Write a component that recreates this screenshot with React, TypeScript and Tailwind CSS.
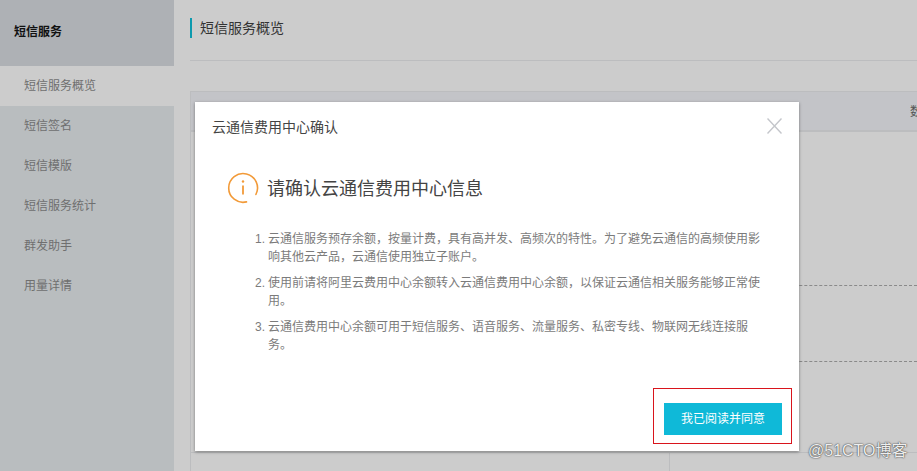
const navItems = ['短信服务概览', '短信签名', '短信模版', '短信服务统计', '群发助手', '用量详情']

const terms = [
  '云通信服务预存余额，按量计费，具有高并发、高频次的特性。为了避免云通信的高频使用影响其他云产品，云通信使用独立子账户。',
  '使用前请将阿里云费用中心余额转入云通信费用中心余额，以保证云通信相关服务能够正常使用。',
  '云通信费用中心余额可用于短信服务、语音服务、流量服务、私密专线、物联网无线连接服务。',
]

function Sidebar() {
  return (
    <aside className="w-[174px] shrink-0 bg-[#b9bdbf]">
      <div className="flex h-[66px] items-center bg-[#aeb1b5] pb-[3px] pl-[14px] text-[12px] font-bold text-[#111]">
        短信服务
      </div>
      {navItems.map((item, i) => (
        <div
          key={item}
          className={
            i === 0
              ? 'flex h-[40px] items-center bg-[#cccccc] pl-[24px] text-[12px] text-[#6f6f6f]'
              : 'flex h-[40px] items-center pl-[24px] text-[12px] text-[#6f6f6f]'
          }
        >
          {item}
        </div>
      ))}
    </aside>
  )
}

function Background() {
  return (
    <main className="min-w-0 flex-1 pl-[16px]">
      <div className="flex h-[61px] items-start border-b border-[#bcbdbf] pt-[18px]">
        <div className="flex h-[20px] items-center border-l-2 border-[#0d9aae] pl-[8px] text-[14px] text-[#333]">
          短信服务概览
        </div>
      </div>
      <div className="mt-[30px] border-l border-[#bcbdbf]">
        <div className="flex h-[41px] justify-end overflow-hidden border-b-2 border-t border-[#bcbdbf] bg-[#c3c4c8]">
          <span className="mr-[-5px] pt-[11px] text-[12px] text-[#555]">数</span>
        </div>
        <div className="h-[320px] pt-[153px] pl-[20px]">
          <div className="h-[76px] border-t border-dashed border-[#8a8a8a]" />
          <div className="border-t border-dashed border-[#8a8a8a]" />
        </div>
        <div className="flex h-[19px] border-t border-[#bcbdbf]">
          <div className="w-[479px] border-r border-[#bcbdbf]" />
        </div>
      </div>
    </main>
  )
}

function InfoIcon() {
  return (
    <svg width="32" height="32" viewBox="0 0 32 32" fill="none" className="shrink-0">
      <path
        d="M19.5 29.9A14.4 14.4 0 1 1 28.9 22.5"
        stroke="#f29a38"
        strokeWidth="1.6"
        strokeLinecap="round"
      />
      <circle cx="16" cy="9.5" r="1.2" fill="#f29a38" />
      <path d="M16 13.5V22.5" stroke="#f29a38" strokeWidth="1.8" />
    </svg>
  )
}

function Modal() {
  return (
    <div className="absolute left-[195px] top-[102px] flex h-[349px] w-[604px] flex-col bg-white shadow-[0_1px_3px_rgba(0,0,0,0.4)]">
      <div className="flex h-[50px] items-center justify-between px-[17px]">
        <span className="text-[14px] text-[#444]">云通信费用中心确认</span>
        <svg width="15" height="16" viewBox="0 0 15 16" fill="none" stroke="#c4c6cb" strokeWidth="1.4" className="mt-[-2px]">
          <path d="M0.5 0.5L14.5 15.5M14.5 0.5L0.5 15.5" />
        </svg>
      </div>
      <div className="flex items-center gap-[8px] pl-[32px] pt-[19px]">
        <InfoIcon />
        <span className="pt-[2px] text-[18px] leading-[32px] text-[#444]">请确认云通信费用中心信息</span>
      </div>
      <ol className="mt-[25px] flex list-none flex-col gap-[8px] pl-[60px] pr-[35px] text-[12px] leading-[18px] text-[#7b7b7b]">
        {terms.map((term, i) => (
          <li key={term} className="flex">
            <span className="w-[13px] shrink-0">{i + 1}.</span>
            <span className="min-w-0">{term}</span>
          </li>
        ))}
      </ol>
      <div className="mt-auto flex justify-end pb-[16px] pr-[17px]">
        <button className="h-[32px] w-[118px] bg-[#0fb9d8] text-[12px] text-white">我已阅读并同意</button>
      </div>
    </div>
  )
}

export default function App() {
  return (
    <div className="relative flex h-[471px] w-[917px] overflow-hidden bg-[#cccccc] font-['Liberation_Sans','Noto_Sans_CJK_SC',sans-serif]">
      <Sidebar />
      <Background />
      <Modal />
      <div className="absolute left-[653px] top-[388px] h-[56px] w-[139px] border border-[#d9141c]" />
      <div className="absolute left-[808px] top-[441px] text-[16px] leading-[20px] text-[#eee] [text-shadow:0_0_1px_#333,0_0_2px_#555]">
        @51CTO博客
      </div>
    </div>
  )
}
